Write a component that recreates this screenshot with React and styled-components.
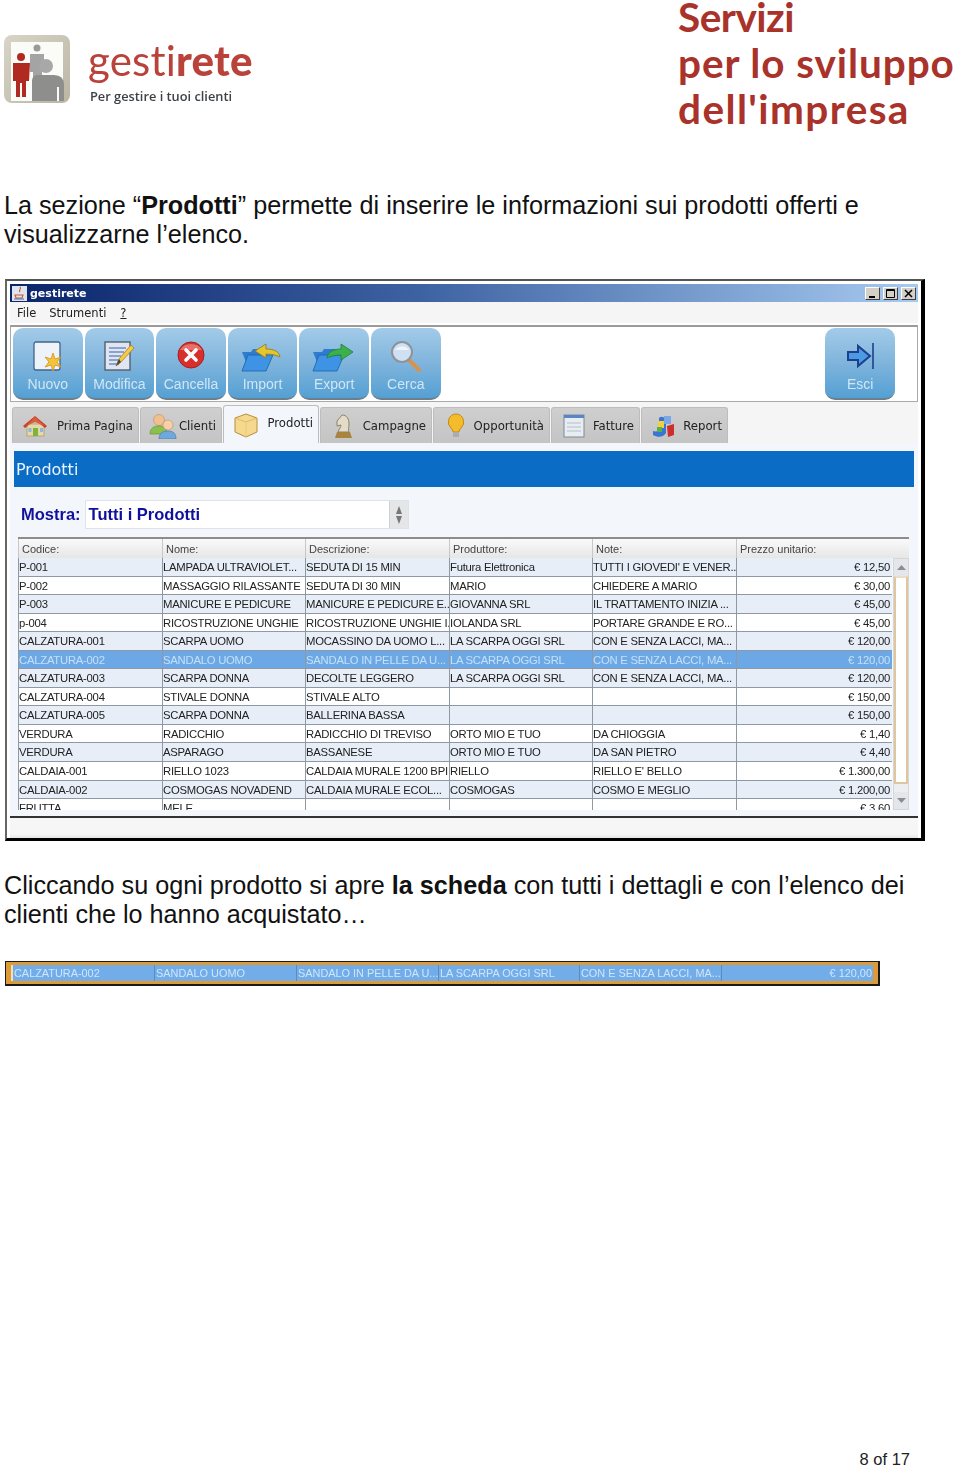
import React from "react"
import styled, { createGlobalStyle } from "styled-components"

const GlobalStyle = createGlobalStyle`
  html, body {
    margin: 0;
    padding: 0;
    background: #fff;
  }
`

const Page = styled.div`
  position: relative;
  width: 960px;
  height: 1467px;
  overflow: hidden;
  display: flex;
  flex-direction: column;
  font-family: "Liberation Sans", Arial, sans-serif;
  color: #111;
`

const Header = styled.header`
  display: flex;
  justify-content: space-between;
  height: 191px;
`

const Logo = styled.div`
  display: flex;
  gap: 18px;
  padding: 35px 0 0 4px;
  height: 72px;
  filter: blur(0.4px);
`

const LogoText = styled.div`
  display: flex;
  flex-direction: column;
  padding-top: 5px;
`

const LogoName = styled.div`
  font-family: Lato, sans-serif;
  font-size: 42px;
  line-height: 40px;
  letter-spacing: 0.2px;
  font-weight: 400;
  color: #b9423a;
  b {
    font-weight: 900;
  }
`

const LogoTag = styled.div`
  font-family: "Open Sans", sans-serif;
  font-size: 12.8px;
  font-weight: 600;
  line-height: 20px;
  margin: 6px 0 0 2px;
  color: #3d4247;
  white-space: nowrap;
`

const Slogan = styled.div`
  width: 282px;
  font-family: Lato, sans-serif;
  font-size: 40.5px;
  font-weight: 700;
  line-height: 46px;
  margin-top: -6px;
  color: #a9322a;
  white-space: nowrap;
`

const SloganLine = styled.div`
  letter-spacing: ${(p) => p.$spacing}px;
`

const Paragraph = styled.p`
  margin: 0 0 0 4px;
  font-size: 25.2px;
  line-height: 29px;
  white-space: nowrap;
`

const Window = styled.section`
  box-sizing: border-box;
  width: 920px;
  height: 562px;
  margin: 30px 0 30px 5px;
  padding: 3px 3px 0 3px;
  background: #fff;
  border: solid #000;
  border-width: 2px 4px 3px 2px;
  border-top-color: #555;
  border-left-color: #666;
  display: flex;
  flex-direction: column;
  filter: blur(0.3px);
`

const TitleBar = styled.div`
  height: 18px;
  display: flex;
  align-items: center;
  gap: 3px;
  padding: 0 2px;
  background: linear-gradient(90deg, #0a246a 0%, #3d62a2 45%, #a6caf0 100%);
  color: #fff;
  font-family: "DejaVu Sans", sans-serif;
  font-size: 11px;
  font-weight: 700;
`

const TitleButtons = styled.div`
  display: flex;
  gap: 3px;
  margin-left: auto;
`

const TitleButton = styled.span`
  box-sizing: border-box;
  width: 15px;
  height: 13px;
  display: flex;
  align-items: center;
  justify-content: center;
  background: #d4d0c8;
  border: 1px solid;
  border-color: #fff #404040 #404040 #fff;
`

const MenuBar = styled.nav`
  height: 21px;
  padding: 1px 7px 0;
  box-sizing: border-box;
  display: flex;
  align-items: center;
  gap: 13px;
  background: #f5f5f5;
  font-family: "DejaVu Sans", sans-serif;
  font-size: 11.5px;
  color: #222;
  u {
    margin-left: 1px;
  }
`

const Toolbar = styled.div`
  box-sizing: border-box;
  height: 77px;
  margin: 2px 0 0;
  padding: 1px 22px 0 2px;
  background: #fff;
  border: 1px solid #aaa;
  border-top: 2px solid #9a9a9a;
  display: flex;
  gap: 2px;
`

const ToolButton = styled.div`
  box-sizing: border-box;
  width: 69.6px;
  height: 72px;
  border-radius: 10px;
  background: linear-gradient(180deg, #a3cbe8 0%, #7fb4dc 50%, #54a0d3 100%);
  border-bottom: 2px solid #6d7f8c;
  display: flex;
  flex-direction: column;
  align-items: center;
  padding-top: 12px;
  color: #cfe6f6;
  font-size: 14px;
  margin-left: ${(p) => (p.$push ? "auto" : "0")};
  span {
    margin-top: 4px;
    line-height: 16px;
    white-space: nowrap;
  }
  svg {
    height: 32px;
    width: auto;
    display: block;
  }
`

const TabStrip = styled.div`
  height: 41px;
  padding: 3px 0 0 2px;
  box-sizing: border-box;
  display: flex;
  gap: 1px;
  align-items: flex-end;
  background: #f5f5f5;
`

const Tab = styled.div`
  box-sizing: border-box;
  width: ${(p) => p.$w}px;
  height: ${(p) => (p.$active ? 38 : 36)}px;
  display: flex;
  align-items: center;
  justify-content: space-between;
  padding: 0 5px 0 8px;
  border: 1px solid #bdbdbd;
  border-bottom: 0;
  border-radius: 3px 3px 0 0;
  background: ${(p) => (p.$active ? "#f3f6fb" : "linear-gradient(180deg,#cfcfcf,#c4c4c4)")};
  font-family: "DejaVu Sans", sans-serif;
  font-size: 11.7px;
  color: #222;
  white-space: nowrap;
  svg {
    width: 28px;
    height: 26px;
    display: block;
    flex: none;
  }
  span {
    padding-bottom: ${(p) => (p.$active ? "3px" : "0")};
  }
`

const Content = styled.div`
  flex: 1;
  background: #f3f6fa;
  display: flex;
  flex-direction: column;
  padding: 8px 4px 0;
`

const SectionBar = styled.h2`
  margin: 0;
  height: 36px;
  display: flex;
  align-items: center;
  padding: 1px 0 0 2px;
  box-sizing: border-box;
  background: #0b6cc6;
  color: #eaf4fd;
  font-family: "DejaVu Sans", sans-serif;
  font-size: 16px;
  font-weight: 500;
`

const FilterRow = styled.div`
  display: flex;
  align-items: center;
  gap: 4px;
  height: 29px;
  margin: 13px 0 0 7px;
  color: #10109e;
  font-size: 16.5px;
  font-weight: 700;
`

const Combo = styled.div`
  box-sizing: border-box;
  width: 324px;
  height: 29px;
  background: #fff;
  border: 1px solid #dfe2e6;
  display: flex;
  align-items: center;
  padding-left: 3px;
  justify-content: space-between;
`

const Spinner = styled.div`
  width: 18px;
  height: 27px;
  background: #e4e6e8;
  border-left: 1px solid #d0d0d0;
  display: flex;
  flex-direction: column;
  align-items: center;
  justify-content: center;
  gap: 2px;
  svg {
    display: block;
  }
`

const TableWrap = styled.div`
  margin: 8px 0 0 4px;
  width: 891px;
  border-top: 2px solid #8d8d8d;
  display: flex;
  flex-wrap: wrap;
`

const ColGrid = `
  display: grid;
  grid-template-columns: 144px 143px 144px 143px 144px 156px;
  width: 874px;
`

const HeadRow = styled.div`
  ${ColGrid}
  height: 19px;
  width: 891px;
  grid-template-columns: 144px 143px 144px 143px 144px 173px;
  background: linear-gradient(180deg, #fafafa, #e6e6e6);
  box-sizing: border-box;
`

const HeadCell = styled.div`
  padding-left: 3px;
  font-size: 11px;
  line-height: 20px;
  color: #444;
  border-left: 1px solid #c8c8c8;
`

const Rows = styled.div`
  width: 874px;
  height: 252px;
  overflow: hidden;
`

const Row = styled.div`
  ${ColGrid}
  height: 18.55px;
  box-sizing: border-box;
  border-bottom: 1px solid #8f99a3;
  background: ${(p) => (p.$selected ? "#6da8e6" : p.$odd ? "#e8eef8" : "#fff")};
  color: ${(p) => (p.$selected ? "#c3e0f8" : "#222")};
`

const Cell = styled.div`
  box-sizing: border-box;
  font-size: 11.3px;
  line-height: 18px;
  letter-spacing: -0.25px;
  white-space: nowrap;
  overflow: hidden;
  border-left: 1px solid #8f99a3;
  text-align: ${(p) => (p.$right ? "right" : "left")};
  padding-right: ${(p) => (p.$right ? "2px" : "0")};
`

const Scrollbar = styled.div`
  box-sizing: border-box;
  width: 16px;
  height: 252px;
  margin-left: 1px;
  background: #eceef0;
  border: 1px solid #d4d6d8;
  display: flex;
  flex-direction: column;
`

const ScrollArrow = styled.div`
  height: 17px;
  display: flex;
  align-items: center;
  justify-content: center;
  background: #e4e6e9;
`

const ScrollThumb = styled.div`
  flex: 1;
  margin-bottom: 8px;
  background: #fff;
  border: 2px solid #e0c69f;
  border-top-color: #ecdcc3;
`

const ContentBottom = styled.div`
  margin: 6px -4px 0;
  border-top: 2px solid #333;
  flex: 1;
  background: linear-gradient(180deg, #f6f6f6 80%, #e6e6e6);
`

const Strip = styled.div`
  box-sizing: border-box;
  width: 875px;
  height: 25px;
  margin: 32px 0 0 5px;
  border: solid #1a1a1a;
  border-width: 1px 2px 2px 1px;
  background: #dd9a38;
  padding: 3px 5px 3px 5px;
  filter: blur(0.3px);
`

const StripRow = styled.div`
  display: grid;
  grid-template-columns: 142px 142px 142px 141px 142px 1fr;
  height: 100%;
  background: #72ade9;
  border-left: 2px solid #f0e2b8;
  color: #cfe6fa;
  font-size: 10.9px;
  line-height: 16px;
`

const StripCell = styled.div`
  padding-left: 1px;
  border-right: 1px solid #5a8cc0;
  white-space: nowrap;
  overflow: hidden;
  text-align: ${(p) => (p.$right ? "right" : "left")};
  padding-right: ${(p) => (p.$right ? "1px" : "0")};
  &:last-child {
    border-right: 0;
  }
`

const Footer = styled.footer`
  position: absolute;
  right: 50px;
  bottom: -2px;
  font-size: 16.5px;
  line-height: 20px;
  color: #222;
`

const NewIcon = () => (
  <svg viewBox="0 0 34 32">
    <rect x="3" y="2" width="26" height="28" rx="2" fill="#eef3f9" stroke="#41658a" strokeWidth="1.3" />
    <path d="M22 13l2 6 6-2-4 5 4 5-6-2-2 6-2-6-6 2 4-5-4-5 6 2z" fill="#f3c53a" stroke="#d98f1d" strokeWidth=".8" />
  </svg>
)

const EditIcon = () => (
  <svg viewBox="0 0 34 32">
    <rect x="3" y="2" width="25" height="28" fill="#dfe6f2" stroke="#55606e" strokeWidth="1.4" />
    <path d="M7 8h17M7 12h15M7 16h12M7 20h10M7 24h10" stroke="#6f8fc4" strokeWidth="1.3" />
    <path d="M14 26l3-7L29 5l3 3-13 14z" fill="#f5cb45" stroke="#a97c1d" strokeWidth=".8" />
    <path d="M14 26l3-7 2 3z" fill="#444" />
  </svg>
)

const DeleteIcon = () => (
  <svg viewBox="0 0 34 32">
    <circle cx="17" cy="15" r="13" fill="#d82f2c" stroke="#a81f1f" />
    <path d="M6 10a12 10 0 0 1 22 0z" fill="#ee7f7a" opacity=".8" />
    <path d="M12 10l10 10M22 10L12 20" stroke="#fff" strokeWidth="3.6" strokeLinecap="round" />
  </svg>
)

const FolderIcon = ({ color, flip }) => (
  <svg viewBox="0 0 44 32">
    <path d="M1 12h9l2-3h12v18H7z" fill="#2f7ccf" />
    <path d="M1 31L7 15h25l-7 16z" fill="#3f93e4" stroke="#1c5fa8" strokeWidth=".8" />
    {flip ? (
      <path d="M15 18c1-6 6-9 14-9V4l12 8-12 8v-5c-6 0-10 1-14 3z" fill={color} stroke="#1d7f3a" strokeWidth=".8" />
    ) : (
      <path d="M39 17c-1-6-7-8-14-8V4L14 11l11 7v-4c6 0 10 1 14 3z" fill={color} stroke="#8e7a18" strokeWidth=".8" />
    )}
  </svg>
)

const SearchIcon = () => (
  <svg viewBox="0 0 34 32">
    <path d="M20 20l10 10" stroke="#d9924a" strokeWidth="4" strokeLinecap="round" />
    <circle cx="13" cy="12" r="10" fill="#cfe0f2" stroke="#8d939a" strokeWidth="2" />
    <path d="M6 10a8 7 0 0 1 14 0z" fill="#eef5fb" />
  </svg>
)

const ExitIcon = () => (
  <svg viewBox="0 0 34 32">
    <path d="M5 12h10V6l12 10-12 10v-6H5z" fill="#4d9ae4" stroke="#1d3f8c" strokeWidth="2" />
    <path d="M30 3v26" stroke="#1d3f8c" strokeWidth="1.6" />
  </svg>
)

const HouseIcon = () => (
  <svg viewBox="0 0 28 26">
    <rect x="6" y="11" width="17" height="12" fill="#e6d9a8" stroke="#a08a55" strokeWidth=".6" />
    <path d="M2 13L14 3l12 10-2 2L14 7 4 15z" fill="#c8402c" />
    <path d="M5 13L14 4l10 9-10-4z" fill="#d9603a" />
    <rect x="12" y="15" width="5" height="8" fill="#7fb23f" />
    <rect x="7.5" y="15" width="3" height="4" fill="#8fb7d9" />
    <rect x="19" y="15" width="3" height="4" fill="#8fb7d9" />
  </svg>
)

const UsersIcon = () => (
  <svg viewBox="0 0 28 26">
    <circle cx="10" cy="7" r="5.5" fill="#f0c08e" stroke="#c08c5c" strokeWidth=".6" />
    <path d="M1 21c0-6 4-8 9-8s8 2 8 8z" fill="#8cc04e" stroke="#5f8f2e" strokeWidth=".6" />
    <circle cx="19" cy="12" r="5" fill="#f5d0aa" stroke="#c08c5c" strokeWidth=".6" />
    <path d="M10 26c0-6 4-8 9-8s8 2 8 8z" fill="#6ea8dc" stroke="#3f76ab" strokeWidth=".6" />
  </svg>
)

const BoxIcon = () => (
  <svg viewBox="0 0 28 26">
    <path d="M3 6l11-4 11 4v14l-11 5-11-5z" fill="#f6d98e" stroke="#b58f3e" />
    <path d="M3 6l11 4 11-4" fill="none" stroke="#e2b863" />
    <path d="M14 10v15" stroke="#edc878" />
  </svg>
)

const KnightIcon = () => (
  <svg viewBox="0 0 28 26">
    <path d="M9 19c1-3 3-5 3-7l-4 1 0-5 5-6c5 0 7 4 7 9 0 3-1 6 0 8z" fill="#e2dcc8" stroke="#8a8268" />
    <path d="M8 19h13l2 6H6z" fill="#a8843f" />
  </svg>
)

const BulbIcon = () => (
  <svg viewBox="0 0 28 26">
    <path d="M14 1a8 8 0 0 0-5 14c1 1 2 3 2 4h6c0-1 1-3 2-4a8 8 0 0 0-5-14z" fill="#f4bb2a" stroke="#c48a16" />
    <rect x="11" y="19" width="6" height="5" fill="#a9adb2" />
  </svg>
)

const InvoiceIcon = () => (
  <svg viewBox="0 0 28 26">
    <rect x="4" y="2" width="20" height="22" fill="#e8edf2" stroke="#7d8a97" />
    <rect x="4" y="2" width="20" height="3" fill="#5a86c8" />
    <path d="M7 10h14M7 14h14M7 18h14" stroke="#b4bec8" />
  </svg>
)

const ReportIcon = () => (
  <svg viewBox="0 0 28 26">
    <path d="M3 22c5 3 11 2 13-2V6c-3-3-7-3-7 0v9c0 3-3 4-6 3z" fill="#3c74d4" />
    <rect x="8" y="8" width="6" height="7" fill="#f1d23e" />
    <rect x="7" y="14" width="5" height="5" fill="#58b04a" />
    <rect x="14" y="3" width="7" height="8" fill="#7aa8e4" />
    <path d="M17 13l7-2v11l-6 2z" fill="#cf2d2a" />
  </svg>
)

const JavaIcon = () => (
  <svg width="15" height="15" viewBox="0 0 15 15">
    <rect width="15" height="15" fill="#dfe4ee" />
    <path d="M8 1c2 2-2 3 0 5M3 9h8l-1 3H4z" fill="none" stroke="#d0562a" strokeWidth="1.1" />
    <path d="M2 13h10" stroke="#4a6aa8" />
  </svg>
)

const tools = [
  { label: "Nuovo", icon: <NewIcon /> },
  { label: "Modifica", icon: <EditIcon /> },
  { label: "Cancella", icon: <DeleteIcon /> },
  { label: "Import", icon: <FolderIcon color="#e6c62c" /> },
  { label: "Export", icon: <FolderIcon color="#3cb04a" flip /> },
  { label: "Cerca", icon: <SearchIcon /> },
]

const tabs = [
  { label: "Prima Pagina", w: 127, icon: <HouseIcon /> },
  { label: "Clienti", w: 82, icon: <UsersIcon /> },
  { label: "Prodotti", w: 96, icon: <BoxIcon />, active: true },
  { label: "Campagne", w: 112, icon: <KnightIcon /> },
  { label: "Opportunità", w: 117, icon: <BulbIcon /> },
  { label: "Fatture", w: 89, icon: <InvoiceIcon /> },
  { label: "Report", w: 87, icon: <ReportIcon /> },
]

const heads = ["Codice:", "Nome:", "Descrizione:", "Produttore:", "Note:", "Prezzo unitario:"]

const LACCI = "CON E SENZA LACCI, MA..."
const SCARPA = "LA SCARPA OGGI SRL"
const ORTO = "ORTO MIO E TUO"

const rows = [
  ["P-001", "LAMPADA ULTRAVIOLET...", "SEDUTA DI 15 MIN", "Futura Elettronica", "TUTTI I GIOVEDI' E VENER...", "€ 12,50"],
  ["P-002", "MASSAGGIO RILASSANTE", "SEDUTA DI 30 MIN", "MARIO", "CHIEDERE A MARIO", "€ 30,00"],
  ["P-003", "MANICURE E PEDICURE", "MANICURE E PEDICURE E...", "GIOVANNA SRL", "IL TRATTAMENTO INIZIA ...", "€ 45,00"],
  ["p-004", "RICOSTRUZIONE UNGHIE", "RICOSTRUZIONE UNGHIE I...", "IOLANDA SRL", "PORTARE GRANDE E RO...", "€ 45,00"],
  ["CALZATURA-001", "SCARPA UOMO", "MOCASSINO DA UOMO L...", SCARPA, LACCI, "€ 120,00"],
  ["CALZATURA-002", "SANDALO UOMO", "SANDALO IN PELLE DA U...", SCARPA, LACCI, "€ 120,00"],
  ["CALZATURA-003", "SCARPA DONNA", "DECOLTE LEGGERO", SCARPA, LACCI, "€ 120,00"],
  ["CALZATURA-004", "STIVALE DONNA", "STIVALE ALTO", "", "", "€ 150,00"],
  ["CALZATURA-005", "SCARPA DONNA", "BALLERINA BASSA", "", "", "€ 150,00"],
  ["VERDURA", "RADICCHIO", "RADICCHIO DI TREVISO", ORTO, "DA CHIOGGIA", "€ 1,40"],
  ["VERDURA", "ASPARAGO", "BASSANESE", ORTO, "DA SAN PIETRO", "€ 4,40"],
  ["CALDAIA-001", "RIELLO 1023", "CALDAIA MURALE 1200 BPI", "RIELLO", "RIELLO E' BELLO", "€ 1.300,00"],
  ["CALDAIA-002", "COSMOGAS NOVADEND", "CALDAIA MURALE ECOL...", "COSMOGAS", "COSMO E MEGLIO", "€ 1.200,00"],
  ["FRUTTA", "MELE", "", "", "", "€ 3,60"],
]

const selected = rows[5]

const LogoMark = () => (
  <svg width="66" height="68" viewBox="0 0 66 68">
    <defs>
      <linearGradient id="logoBg" x1="0" y1="0" x2="1" y2="1">
        <stop offset="0" stopColor="#d8d5c8" />
        <stop offset="1" stopColor="#b9b6a4" />
      </linearGradient>
    </defs>
    <rect width="66" height="68" rx="8" fill="url(#logoBg)" />
    <rect x="7" y="7" width="52" height="59" fill="#fbfbf8" />
    <circle cx="33" cy="13" r="3.5" fill="#9a9a9a" />
    <path d="M26 19h14v18h-2v14h-9V37h-3z" fill="#a4a4a4" />
    <circle cx="42" cy="31" r="7" fill="#a8a8a8" />
    <path d="M28 66V46q0-6 6-6h16q10 0 10 10v16h-5V52h-2v14z" fill="#8e8e8c" />
    <circle cx="17" cy="22" r="4" fill="#b02a22" />
    <path d="M9 28h17l-1 18h-3v16h-4V48h-2v14h-4V46h-3z" fill="#b02a22" />
  </svg>
)

const App = () => (
  <Page>
    <GlobalStyle />
    <Header>
      <Logo>
        <LogoMark />
        <LogoText>
          <LogoName>
            gesti<b>rete</b>
          </LogoName>
          <LogoTag>Per gestire i tuoi clienti</LogoTag>
        </LogoText>
      </Logo>
      <Slogan>
        <SloganLine $spacing={-0.5}>Servizi</SloganLine>
        <SloganLine $spacing={0.9}>per lo sviluppo</SloganLine>
        <SloganLine $spacing={1.4}>dell'impresa</SloganLine>
      </Slogan>
    </Header>

    <Paragraph>
      La sezione “<b>Prodotti</b>” permette di inserire le informazioni sui prodotti offerti e
      <br />
      visualizzarne l’elenco.
    </Paragraph>

    <Window>
      <TitleBar>
        <JavaIcon />
        gestirete
        <TitleButtons>
          <TitleButton>
            <svg width="9" height="9"><path d="M1 7h6v2H1z" fill="#000" /></svg>
          </TitleButton>
          <TitleButton>
            <svg width="9" height="9"><path d="M.5.5h8v8h-8zM.5 1.5h8" fill="none" stroke="#000" /></svg>
          </TitleButton>
          <TitleButton>
            <svg width="9" height="9"><path d="M1 1l7 7M8 1L1 8" stroke="#000" strokeWidth="1.5" /></svg>
          </TitleButton>
        </TitleButtons>
      </TitleBar>
      <MenuBar>
        <span>File</span>
        <span>Strumenti</span>
        <u>?</u>
      </MenuBar>
      <Toolbar>
        {tools.map((t) => (
          <ToolButton key={t.label}>
            {t.icon}
            <span>{t.label}</span>
          </ToolButton>
        ))}
        <ToolButton $push>
          <ExitIcon />
          <span>Esci</span>
        </ToolButton>
      </Toolbar>
      <TabStrip>
        {tabs.map((t) => (
          <Tab key={t.label} $w={t.w} $active={t.active}>
            {t.icon}
            <span>{t.label}</span>
          </Tab>
        ))}
      </TabStrip>
      <Content>
        <SectionBar>Prodotti</SectionBar>
        <FilterRow>
          Mostra:
          <Combo>
            Tutti i Prodotti
            <Spinner>
              <svg width="6" height="8"><path d="M3 0l3 8H0z" fill="#777" /></svg>
              <svg width="6" height="8"><path d="M3 8L6 0H0z" fill="#777" /></svg>
            </Spinner>
          </Combo>
        </FilterRow>
        <TableWrap>
          <HeadRow>
            {heads.map((h) => (
              <HeadCell key={h}>{h}</HeadCell>
            ))}
          </HeadRow>
          <Rows>
            {rows.map((r, i) => (
              <Row key={i} $odd={i % 2 === 0} $selected={i === 5}>
                {r.map((c, j) => (
                  <Cell key={j} $right={j === 5}>
                    {c}
                  </Cell>
                ))}
              </Row>
            ))}
          </Rows>
          <Scrollbar>
            <ScrollArrow>
              <svg width="9" height="5"><path d="M4.5 0L9 5H0z" fill="#8a8f95" /></svg>
            </ScrollArrow>
            <ScrollThumb />
            <ScrollArrow>
              <svg width="9" height="5"><path d="M4.5 5L9 0H0z" fill="#8a8f95" /></svg>
            </ScrollArrow>
          </Scrollbar>
        </TableWrap>
        <ContentBottom />
      </Content>
    </Window>

    <Paragraph>
      Cliccando su ogni prodotto si apre <b>la scheda</b> con tutti i dettagli e con l’elenco dei
      <br />
      clienti che lo hanno acquistato…
    </Paragraph>

    <Strip>
      <StripRow>
        {selected.map((c, j) => (
          <StripCell key={j} $right={j === 5}>
            {c}
          </StripCell>
        ))}
      </StripRow>
    </Strip>

    <Footer>8 of 17</Footer>
  </Page>
)

export default App
